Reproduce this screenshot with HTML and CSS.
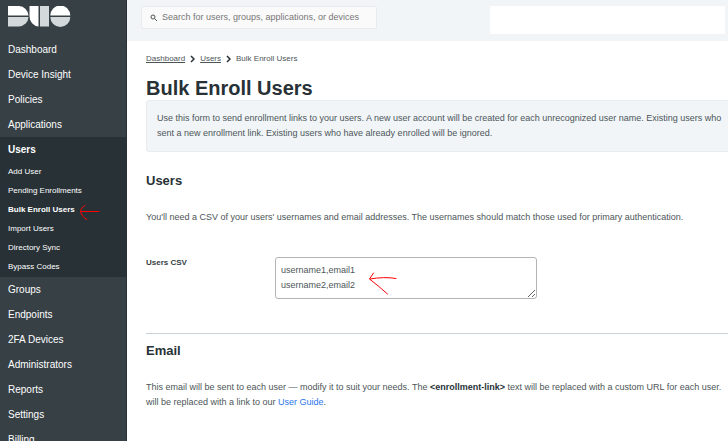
FILE: index.html
```html
<!DOCTYPE html>
<html lang="en">
<head>
  <meta charset="UTF-8">
  <title>Bulk Enroll Users</title>
  <link rel="stylesheet" href="styles.css">
</head>
<body>

  <div class="app">
    <!-- Sidebar -->
    <nav class="sidebar">
      <a class="logo" href="#" aria-label="Duo">
        <svg width="63" height="21" viewBox="0 0 63 21">
          <path fill="#fff" d="M0 0h11a10 10 0 0 1 9.500 9.500H0z"/>
          <path fill="#d3d9db" d="M0 11h20.500a10 10 0 0 1-9.500 9.500H0z"/>
          <path fill="#fff" d="M21.500 0h9v20.500a10 10 0 0 1-9-10z"/>
          <path fill="#d3d9db" d="M32 0h9v20.500h-9z"/>
          <path fill="#fff" d="M42.300 9.500a10 10 0 0 1 20 0z"/>
          <path fill="#d3d9db" d="M42.300 11h20a10 10 0 0 1-20 0z"/>
        </svg>
      </a>
      <ul class="menu">
        <li><a href="#">Dashboard</a></li>
        <li><a href="#">Device Insight</a></li>
        <li><a href="#">Policies</a></li>
        <li><a href="#">Applications</a></li>
        <li class="open">
          <a href="#">Users</a>
          <ul class="submenu">
            <li><a href="#">Add User</a></li>
            <li><a href="#">Pending Enrollments</a></li>
            <li class="current">
              <a href="#">Bulk Enroll Users</a>
              <svg class="arrow arrow-menu" width="22" height="17" viewBox="0 0 22 17">
                <path d="M20 7.500H2M6 1.500C3 3 2 5 1.500 7.500C2.500 11 4.500 14 8 15.500"/>
              </svg>
            </li>
            <li><a href="#">Import Users</a></li>
            <li><a href="#">Directory Sync</a></li>
            <li><a href="#">Bypass Codes</a></li>
          </ul>
        </li>
        <li><a href="#">Groups</a></li>
        <li><a href="#">Endpoints</a></li>
        <li><a href="#">2FA Devices</a></li>
        <li><a href="#">Administrators</a></li>
        <li><a href="#">Reports</a></li>
        <li><a href="#">Settings</a></li>
        <li><a href="#">Billing</a></li>
      </ul>
    </nav>

    <div class="page">
      <!-- Top bar -->
      <header class="topbar">
        <label class="search">
          <svg width="8" height="8" viewBox="0 0 8 8">
            <circle cx="3" cy="3" r="2"/>
            <path d="M4.500 4.500L7 7"/>
          </svg>
          <input type="text" aria-label="Search" placeholder="Search for users, groups, applications, or devices">
        </label>
        <div class="account"></div>
      </header>

      <main class="content">
        <nav class="breadcrumb">
          <a href="#">Dashboard</a>
          <svg width="5" height="8" viewBox="0 0 5 8"><path d="M1 1l3 3-3 3"/></svg>
          <a href="#">Users</a>
          <svg width="5" height="8" viewBox="0 0 5 8"><path d="M1 1l3 3-3 3"/></svg>
          <span>Bulk Enroll Users</span>
        </nav>

        <h1>Bulk Enroll Users</h1>

        <p class="notice">Use this form to send enrollment links to your users. A new user account will be created for each unrecognized user name. Existing users who<br>sent a new enrollment link. Existing users who have already enrolled will be ignored.</p>

        <section>
          <h2>Users</h2>
          <p>You'll need a CSV of your users' usernames and email addresses. The usernames should match those used for primary authentication.</p>
          <div class="field">
            <label for="csv">Users CSV</label>
            <div class="field-box">
              <textarea id="csv" rows="2">username1,email1
username2,email2</textarea>
              <svg class="arrow arrow-csv" width="30" height="25" viewBox="0 0 30 25">
                <path d="M28 7.500C20 6 11 6.500 2 8M5.500 2C4 4 3 6 1.500 8C8 13 14 18 19.500 23"/>
              </svg>
            </div>
          </div>
        </section>

        <section class="email">
          <h2>Email</h2>
          <p>This email will be sent to each user — modify it to suit your needs. The <strong>&lt;enrollment-link&gt;</strong> text will be replaced with a custom URL for each user.<br>will be replaced with a link to our <a href="#">User Guide</a>.</p>
        </section>
      </main>
    </div>
  </div>

</body>
</html>
```

FILE: styles.css
```css
* {
  box-sizing: border-box;
}

body {
  margin: 0;
  background: #fff;
  color: #4d5558;
  font-family: "Liberation Sans", Arial, sans-serif;
  font-size: 9px;
  line-height: 15px;
}

ul {
  list-style: none;
  margin: 0;
  padding: 0;
}

.app {
  display: flex;
  height: calc(100vh - 7px);
  overflow: hidden;
}

/* Sidebar */
.sidebar {
  flex: 0 0 127px;
  background: #364045;
  border-right: 1px solid #273136;
}

.logo {
  display: block;
  height: 37px;
  padding: 6px 8px 0;
}

.logo svg {
  display: block;
}

.menu a {
  display: block;
  padding-left: 8px;
  color: #fff;
  font-size: 10px;
  line-height: 25px;
  text-decoration: none;
}

.menu .open {
  background: #273136;
  padding-bottom: 1px;
}

.open > a {
  font-weight: bold;
}

.menu .submenu a {
  font-size: 8px;
  line-height: 19px;
}

.menu .current a {
  font-weight: bold;
}

.current {
  position: relative;
}

.arrow {
  position: absolute;
  fill: none;
  stroke: #f00;
  stroke-linecap: round;
}

.arrow-menu {
  left: 79px;
  top: 4px;
}

/* Top bar */
.page {
  flex: 1;
  min-width: 0;
}

.topbar {
  display: flex;
  justify-content: space-between;
  height: 41px;
  padding: 6px 3px 6px 14px;
  background: #f1f5f8;
}

.search {
  display: flex;
  align-items: center;
  gap: 4px;
  width: 236px;
  height: 23px;
  padding: 0 8px;
  background: #fafafa;
  border: 1px solid #e8ecee;
  border-radius: 2px;
}

.search svg {
  fill: none;
  stroke: #4d5558;
}

.search input {
  flex: 1;
  min-width: 0;
  padding: 0;
  border: 0;
  outline: 0;
  background: none;
  font: inherit;
}

.search input::placeholder {
  color: #777;
}

.account {
  width: 235px;
  height: 28px;
  background: #fff;
}

/* Content */
.content {
  padding: 10px 0 0 19px;
  white-space: nowrap;
}

.breadcrumb {
  display: flex;
  align-items: center;
  gap: 5px;
  font-size: 8px;
}

.breadcrumb a {
  color: inherit;
}

.breadcrumb svg {
  fill: none;
  stroke: #273136;
  stroke-width: 1.5;
}

h1 {
  margin: 10px 0 0;
  color: #273136;
  font-size: 20px;
  line-height: 24px;
}

.notice {
  margin: 0 -10px 0 0;
  padding: 10px;
  background: #f1f5f8;
  border: 1px solid #e6ecef;
  border-radius: 3px;
}

h2 {
  margin: 0;
  color: #273136;
  font-size: 13px;
  line-height: 18px;
}

section {
  padding-top: 20px;
}

section p {
  margin: 20px 0 0;
}

.field {
  display: flex;
  margin-top: 32px;
}

.field label {
  flex: 0 0 129px;
  color: #364045;
  font-size: 8px;
  font-weight: bold;
  line-height: 12px;
}

.field-box {
  position: relative;
}

textarea {
  display: block;
  width: 262px;
  height: 42px;
  padding: 5px;
  border: 1px solid #b4b4b4;
  border-radius: 3px;
  overflow: hidden;
  color: inherit;
  font: inherit;
}

.arrow-csv {
  left: 93px;
  top: 14px;
}

.email {
  margin-top: 34px;
  padding-top: 8px;
  border-top: 1px solid #c8d4da;
}

strong {
  color: #273136;
}

section a {
  color: #2d76ea;
  text-decoration: none;
}
```
